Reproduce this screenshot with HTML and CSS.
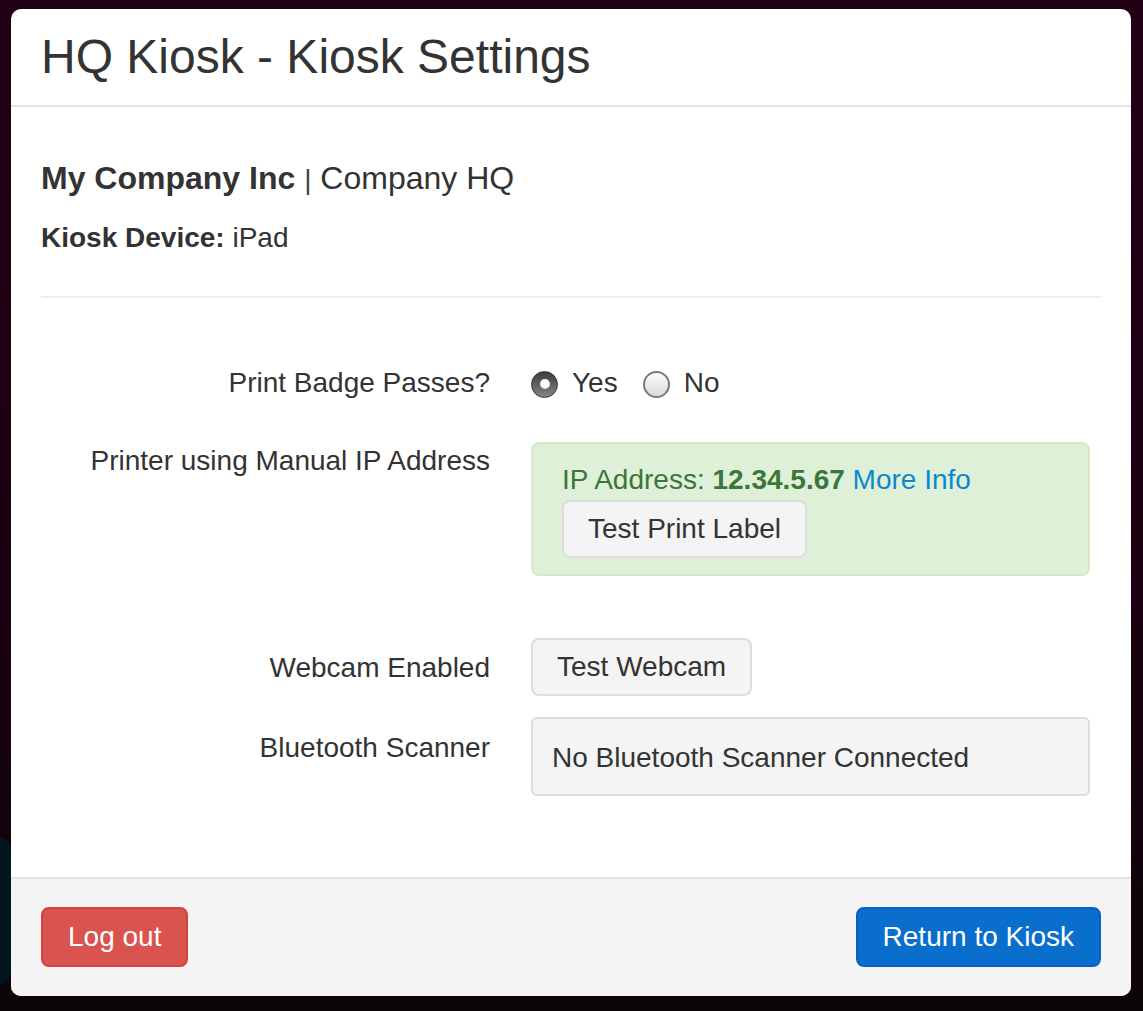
FILE: index.html
```html
<!DOCTYPE html>
<html lang="en">
<head>
<meta charset="utf-8">
<title>HQ Kiosk - Kiosk Settings</title>
<link rel="stylesheet" href="styles.css">
</head>
<body>
<div class="backdrop-shape"></div>
<div class="modal">
  <div class="modal-header">
    <h3 class="modal-title">HQ Kiosk - Kiosk Settings</h3>
  </div>
  <div class="modal-body">
    <p class="company"><strong>My Company Inc</strong> <span class="sep">|</span> Company HQ</p>
    <p class="device"><strong>Kiosk Device:</strong> iPad</p>
    <hr class="divider">
    <div class="form">
      <div class="row row-badge">
        <div class="label">Print Badge Passes?</div>
        <div class="control radios">
          <label class="radio-opt"><span class="radio radio-on"></span>Yes</label>
          <label class="radio-opt radio-second"><span class="radio radio-off"></span>No</label>
        </div>
      </div>
      <div class="row row-printer">
        <div class="label label-flush">Printer using Manual IP Address</div>
        <div class="control">
          <div class="alert-success">
            <div class="ip-line">IP Address: <strong>12.34.5.67</strong> <a class="link" href="#">More Info</a></div>
            <button class="btn btn-default">Test Print Label</button>
          </div>
        </div>
      </div>
      <div class="row row-webcam">
        <div class="label label-pad">Webcam Enabled</div>
        <div class="control">
          <button class="btn btn-default">Test Webcam</button>
        </div>
      </div>
      <div class="row row-bt">
        <div class="label label-pad2">Bluetooth Scanner</div>
        <div class="control">
          <div class="well">No Bluetooth Scanner Connected</div>
        </div>
      </div>
    </div>
  </div>
  <div class="modal-footer">
    <button class="btn btn-danger">Log out</button>
    <button class="btn btn-primary">Return to Kiosk</button>
  </div>
</div>
</body>
</html>
```
FILE: styles.css
```css
* { box-sizing: border-box; }
html, body {
  margin: 0;
  padding: 0;
}
body {
  width: 1143px;
  height: 1011px;
  overflow: hidden;
  background: linear-gradient(#220013 0%, #1a0010 60%, #0c0508 100%);
  font-family: "Liberation Sans", Arial, Helvetica, sans-serif;
  color: #333;
  padding: 9px 12px 15px 11px;
  position: relative;
}
.backdrop-shape {
  position: absolute;
  left: -20px;
  top: 836px;
  width: 31px;
  height: 149px;
  background: #03161f;
  border-radius: 14px;
}
.modal {
  position: relative;
  width: 1120px;
  height: 987px;
  background: #fff;
  border-radius: 10px;
  overflow: hidden;
  display: flex;
  flex-direction: column;
}
.modal-header {
  padding: 21px 30px 22px;
  border-bottom: 2px solid #e5e5e5;
  flex: none;
}
.modal-title {
  margin: 0;
  font-size: 48px;
  line-height: 53px;
  font-weight: normal;
  color: #333;
}
.modal-body {
  padding: 51px 30px 0;
  flex: 1;
  min-height: 0;
  overflow: hidden;
}
.company {
  margin: 0;
  height: 40px;
  font-size: 32px;
  line-height: 40px;
}
.sep {
  font-size: 28px;
  line-height: 1;
  color: #444;
}
.device {
  margin: 20px 0 0;
  font-size: 28px;
  line-height: 40px;
}
.divider {
  margin: 38px 0 65px;
  border: 0;
  border-top: 2px solid #eeeeee;
  height: 0;
}
.form {
  font-size: 28px;
  line-height: 40px;
}
.row {
  display: grid;
  grid-template-columns: 449px 559px;
  column-gap: 41px;
  align-items: start;
}
.row-printer { margin-top: 38px; }
.row-webcam { margin-top: 62px; }
.row-bt { margin-top: 21px; }
.label {
  text-align: right;
}
.label-pad { padding-top: 10px; }
.label-pad2 { padding-top: 11px; }
.radios {
  display: flex;
  align-items: center;
  height: 40px;
}
.radio-opt {
  display: flex;
  align-items: center;
}
.radio-second { margin-left: 25px; }
.radio {
  width: 27px;
  height: 27px;
  border-radius: 50%;
  margin-right: 14px;
  margin-top: 2px;
  display: flex;
  align-items: center;
  justify-content: center;
}
.radio-on {
  background: linear-gradient(#3c3c3c, #858585);
  border: 1px solid #333;
}
.radio-on::after {
  content: "";
  width: 10px;
  height: 10px;
  border-radius: 50%;
  background: radial-gradient(circle at 50% 40%, #ffffff 40%, #cfcfcf 100%);
}
.radio-off {
  background: linear-gradient(#fdfdfd, #d9d9d9);
  border: 2px solid #7a7a7a;
}
.alert-success {
  margin-top: 1px;
  height: 134px;
  background: #dff0d8;
  border: 2px solid #d6e9c6;
  border-radius: 8px;
  padding: 16px 29px 16px;
  color: #3c763d;
}
.ip-line strong { font-weight: bold; }
.link {
  color: #0a89cf;
  text-decoration: none;
}
.btn {
  font-family: "Liberation Sans", Arial, Helvetica, sans-serif;
  font-size: 28px;
  line-height: 40px;
  border-radius: 8px;
  padding: 7px 24px;
  cursor: pointer;
  display: inline-block;
}
.btn-default {
  background: #f4f4f4;
  border: 2px solid #dddddd;
  color: #333;
}
.well {
  background: #f4f4f4;
  border: 2px solid #dddddd;
  border-radius: 6px;
  padding: 19px 19px 16px;
  height: 79px;
}
.modal-footer {
  flex: none;
  border-top: 2px solid #e5e5e5;
  background: #f4f4f4;
  padding: 28px 30px 29px;
  display: flex;
  justify-content: space-between;
  height: 119px;
}
.btn-danger,
.btn-primary {
  padding: 8px 25px;
  height: 60px;
  color: #fff;
}
.btn-danger {
  background: #d9534f;
  border: 2px solid #d2433e;
}
.btn-primary {
  background: #0a6ecd;
  border: 2px solid #0862bd;
}
```
